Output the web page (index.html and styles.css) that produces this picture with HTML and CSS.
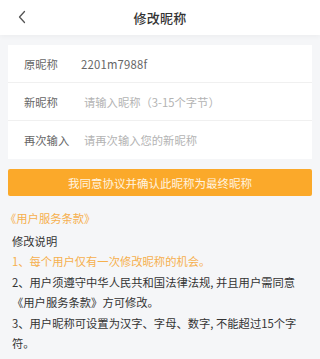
FILE: index.html
```html
<!DOCTYPE html>
<html lang="zh-CN">
<head>
<meta charset="utf-8">
<title>修改昵称</title>
<link rel="stylesheet" href="styles.css">
</head>
<body>
<header class="topbar">
  <span class="back" aria-label="返回">
    <svg width="10" height="14" viewBox="0 0 10 14"><path d="M7.5 1.5 L2.5 7 L7.5 12.5" fill="none" stroke="#555" stroke-width="1.3" stroke-linecap="round" stroke-linejoin="round"/></svg>
  </span>
  <h1 class="title">修改昵称</h1>
</header>
<main class="content">
  <section class="card">
    <div class="row">
      <span class="label">原昵称</span>
      <span class="value">2201m7988f</span>
    </div>
    <div class="row">
      <span class="label">新昵称</span>
      <span class="placeholder">请输入昵称（3-15个字节）</span>
    </div>
    <div class="row">
      <span class="label">再次输入</span>
      <span class="placeholder">请再次输入您的新昵称</span>
    </div>
  </section>
  <button class="confirm">我同意协议并确认此昵称为最终昵称</button>
  <a class="terms">《用户服务条款》</a>
  <section class="notes">
    <h2 class="notes-title">修改说明</h2>
    <p class="note highlight">1、每个用户仅有一次修改昵称的机会。</p>
    <p class="note">2、用户须遵守中华人民共和国法律法规, 并且用户需同意《用户服务条款》方可修改。</p>
    <p class="note">3、用户昵称可设置为汉字、字母、数字, 不能超过15个字符。</p>
  </section>
</main>
</body>
</html>
```
FILE: styles.css
```css
* { box-sizing: border-box; }
html, body { margin: 0; padding: 0; }
body {
  background: #f5f6f8;
  font-family: "Noto Sans CJK SC", "Noto Sans", sans-serif;
  color: #333;
  width: 320px;
  height: 359px;
  overflow: hidden;
}
.topbar {
  height: 35px;
  background: #fff;
  display: flex;
  align-items: center;
  justify-content: center;
  position: relative;
  box-shadow: 0 2px 5px rgba(0,0,0,0.035);
}
.back {
  position: absolute;
  left: 17px;
  top: 10px;
  display: flex;
}
.title {
  margin: 0;
  font-size: 13px;
  font-weight: 500;
  color: #333;
  letter-spacing: 0.3px;
}
.content {
  padding: 10px 8px 0 8px;
  display: flex;
  flex-direction: column;
}
.card {
  background: #fff;
  display: flex;
  flex-direction: column;
}
.row {
  height: 38px;
  display: flex;
  align-items: center;
  padding-left: 16px;
  font-size: 11.3px;
  border-bottom: 1px solid #f0f0f0;
}
.row:last-child { border-bottom: none; }
.label {
  width: 57px;
  color: #666;
}
.value { color: #666; letter-spacing: 0.2px; }
.placeholder { color: #b3b3b3; padding-left: 3px; }
.confirm {
  margin-top: 10px;
  height: 27px;
  border: none;
  border-radius: 2px;
  background: #fba92a;
  color: #fff4e0;
  font-family: inherit;
  font-size: 11.5px;
  padding: 0;
}
.terms {
  margin-top: 12px;
  font-size: 11.3px;
  line-height: 20px;
  color: #f5b04e;
  margin-left: -3px;
}
.notes {
  margin-top: 3px;
  padding: 0 4px;
  font-size: 11.3px;
  line-height: 20.4px;
}
.notes-title {
  margin: 0;
  font-size: 11.3px;
  font-weight: 400;
  color: #333;
}
.note {
  margin: 0;
  color: #333;
}
.note.highlight { color: #f5b04e; }
```
